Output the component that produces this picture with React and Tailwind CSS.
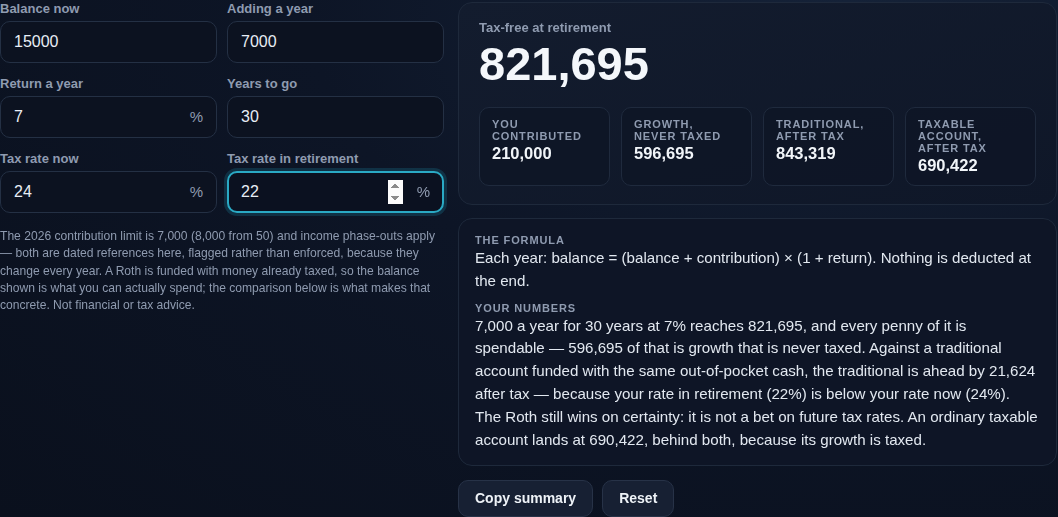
import { useState } from "react";

const fieldDefs = [
  { key: "balance", label: "Balance now" },
  { key: "adding", label: "Adding a year" },
  { key: "ret", label: "Return a year", suffix: "%" },
  { key: "years", label: "Years to go" },
  { key: "taxNow", label: "Tax rate now", suffix: "%" },
  { key: "taxLater", label: "Tax rate in retirement", suffix: "%", focus: true },
];

const defaults = {
  balance: "15000",
  adding: "7000",
  ret: "7",
  years: "30",
  taxNow: "24",
  taxLater: "22",
};

const fmt = (n) => Math.round(n).toLocaleString("en-US");

function Field({ label, value, suffix, focus, onChange }) {
  return (
    <div className="flex flex-col">
      <span className="text-[13px] font-bold leading-[18px] text-[#8f9bb0]">
        {label}
      </span>
      <div
        className={
          focus
            ? "mt-[3px] flex h-[42px] items-center rounded-[10px] border-2 border-[#2aa9c4] bg-[#0b1120] pl-[12px] pr-[12px] shadow-[0_0_0_3px_rgba(34,178,210,0.18)]"
            : "mt-[3px] flex h-[42px] items-center rounded-[10px] border border-[#243044] bg-[#0c1220] pl-[13px] pr-[13px]"
        }
      >
        <input
          type="number"
          aria-label={label}
          autoFocus={focus}
          value={value}
          onChange={(e) => onChange(e.target.value)}
          className="min-w-0 flex-1 bg-transparent text-[16px] text-[#e8edf5] outline-none"
        />
        {suffix && (
          <span className="ml-[14px] text-[15px] text-[#8f9bb0]">{suffix}</span>
        )}
      </div>
    </div>
  );
}

function Stat({ label, value }) {
  return (
    <div className="rounded-[10px] border border-[#1f2a3d] bg-[#0e1526]/80 px-[12px] pb-[10px] pt-[10px]">
      <div className="text-[11px] font-bold uppercase leading-[12px] tracking-[0.08em] text-[#8f9bb0]">
        {label}
      </div>
      <div className="mt-[1px] text-[16.5px] font-bold leading-[20px] text-[#f1f5f9]">
        {value}
      </div>
    </div>
  );
}

export default function App() {
  const [vals, setVals] = useState(defaults);

  const balance = Number(vals.balance) || 0;
  const adding = Number(vals.adding) || 0;
  const r = (Number(vals.ret) || 0) / 100;
  const years = Number(vals.years) || 0;
  const taxNow = (Number(vals.taxNow) || 0) / 100;
  const taxLater = (Number(vals.taxLater) || 0) / 100;

  let roth = balance;
  for (let i = 0; i < years; i++) roth = (roth + adding) * (1 + r);
  const contributed = adding * years;
  const growth = roth - balance - contributed;

  // traditional: same out-of-pocket cash, grossed up by today's rate
  let trad = balance / (1 - taxNow);
  for (let i = 0; i < years; i++) trad = (trad + adding / (1 - taxNow)) * (1 + r);
  const tradAfter = trad * (1 - taxLater);

  // taxable: growth gets taxed
  const taxable = roth - growth * taxLater;

  const diff = tradAfter - roth;

  return (
    <div className="min-h-screen bg-[#0b1220] bg-[radial-gradient(ellipse_at_80%_0%,#152238_0%,#0d1526_45%,#0a101d_100%)] font-['Liberation_Sans',Arial,sans-serif] text-[#e2e8f0]">
      <div className="flex gap-[14px]">
        <div className="w-[444px] shrink-0">
          <div className="grid grid-cols-2 gap-x-[10px] gap-y-[12px]">
            {fieldDefs.map((f) => (
              <Field
                key={f.key}
                label={f.label}
                suffix={f.suffix}
                focus={f.focus}
                value={vals[f.key]}
                onChange={(v) => setVals({ ...vals, [f.key]: v })}
              />
            ))}
          </div>
          <p className="mt-[15px] text-[12.1px] leading-[17.25px] text-[#8f9bb0]">
            The 2026 contribution limit is 7,000 (8,000 from 50) and income
            phase-outs apply — both are dated references here, flagged rather
            than enforced, because they change every year. A Roth is funded
            with money already taxed, so the balance shown is what you can
            actually spend; the comparison below is what makes that concrete.
            Not financial or tax advice.
          </p>
        </div>

        <div className="w-[599px] shrink-0">
          <section className="mt-[2px] rounded-[14px] border border-[#1e293b] bg-gradient-to-br from-[#131c2e] to-[#0f1728] px-[20px] pb-[18px] pt-[18px]">
            <div className="text-[13px] font-bold leading-[14px] text-[#8f9bb0]">
              Tax-free at retirement
            </div>
            <div className="mt-[4px] text-[47px] font-bold leading-[50px] text-[#f4f7fb]">
              {fmt(roth)}
            </div>
            <div className="mt-[18px] grid grid-cols-4 gap-[11px]">
              <Stat label="You contributed" value={fmt(contributed)} />
              <Stat label="Growth, never taxed" value={fmt(growth)} />
              <Stat label="Traditional, after tax" value={fmt(tradAfter)} />
              <Stat label="Taxable account, after tax" value={fmt(taxable)} />
            </div>
          </section>

          <section className="mt-[13px] rounded-[14px] border border-[#1e293b] bg-[#0e1526] px-[16px] pb-[14px] pt-[14px]">
            <div className="text-[11px] font-bold uppercase leading-[14px] tracking-[0.08em] text-[#8f9bb0]">
              The formula
            </div>
            <p className="text-[15.12px] leading-[22.8px] text-[#e2e8f0]">
              Each year: balance = (balance + contribution) × (1 + return).
              Nothing is deducted at the end.
            </p>
            <div className="mt-[8px] text-[11px] font-bold uppercase leading-[14px] tracking-[0.08em] text-[#8f9bb0]">
              Your numbers
            </div>
            <p className="text-[15.12px] leading-[22.8px] text-[#e2e8f0]">
              {fmt(adding)} a year for {years} years at {vals.ret}% reaches{" "}
              {fmt(roth)}, and every penny of it is spendable — {fmt(growth)} of
              that is growth that is never taxed. Against a traditional account
              funded with the same out-of-pocket cash, the traditional is ahead
              by {fmt(Math.abs(diff))} after tax — because your rate in
              retirement ({vals.taxLater}%) is below your rate now (
              {vals.taxNow}%). The{"\u00a0"}Roth still wins on certainty: it is
              not a bet on future tax rates. An ordinary taxable account lands
              at {fmt(taxable)}, behind both, because its growth is taxed.
            </p>
          </section>

          <div className="mt-[14px] flex gap-[9px]">
            <button
              type="button"
              className="h-[37px] rounded-[10px] border border-[#273247] bg-[#172033] px-[16px] text-[14px] font-bold text-[#eef2f7]"
            >
              Copy summary
            </button>
            <button
              type="button"
              onClick={() => setVals(defaults)}
              className="h-[37px] rounded-[10px] border border-[#273247] bg-[#172033] px-[16px] text-[14px] font-bold text-[#eef2f7]"
            >
              Reset
            </button>
          </div>
        </div>
      </div>
    </div>
  );
}
